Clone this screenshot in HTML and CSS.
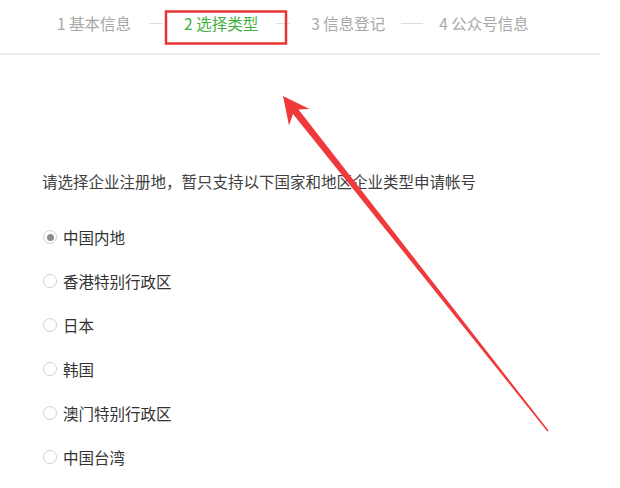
FILE: index.html
```html
<!DOCTYPE html>
<html lang="zh-CN">

<head>
    <meta charset="UTF-8">
    <meta name="viewport" content="width=device-width, initial-scale=1.0">
    <title>选择类型</title>
    <link rel="stylesheet" href="styles.css">
</head>

<body>
    <div class="page">
        <div class="steps">
            <span class="step">1 基本信息</span>
            <span class="step-line"></span>
            <span class="step active">2 选择类型</span>
            <span class="step-line"></span>
            <span class="step">3 信息登记</span>
            <span class="step-line long"></span>
            <span class="step">4 公众号信息</span>
        </div>

        <div class="content">
            <p class="intro">请选择企业注册地，暂只支持以下国家和地区企业类型申请帐号</p>
            <ul class="regions">
                <li><span class="radio checked"></span>中国内地</li>
                <li><span class="radio"></span>香港特别行政区</li>
                <li><span class="radio"></span>日本</li>
                <li><span class="radio"></span>韩国</li>
                <li><span class="radio"></span>澳门特别行政区</li>
                <li><span class="radio"></span>中国台湾</li>
            </ul>
        </div>

        <!-- annotation drawn over the screenshot -->
        <svg class="markup" width="620" height="488" viewBox="0 0 620 488">
            <rect x="166" y="11.5" width="120" height="32" fill="none" stroke="#e83430" stroke-width="2.5" />
            <polygon fill="#f0393a"
                points="283,96 289,125.5 293,114 547.4,431.4 548.6,430.6 298.5,109.6 309.5,109" />
        </svg>
    </div>
</body>

</html>
```

FILE: styles.css
```css
body {
    margin: 0;
    background: #fff;
    font-family: "Noto Sans CJK SC", "Microsoft YaHei", sans-serif;
    color: #353535;
}

.page {
    position: relative;
    width: 620px;
    height: 488px;
    overflow: hidden;
}

.steps {
    display: flex;
    align-items: center;
    width: 543px;
    height: 46px;
    padding: 0 0 7px 57px;
    border-bottom: 2px solid #eeeeee;
    font-size: 15.5px;
    color: #a8a8a8;
}

.step {
    white-space: nowrap;
    line-height: 20px;
}

.step.active {
    color: #3fb040;
}

.step-line {
    width: 14px;
    height: 1px;
    background: #dedede;
    margin: 0 21px 0 18px;
}

.step-line.long {
    width: 22px;
    margin: 0 16px;
}

.content {
    padding-left: 42px;
}

.intro {
    margin: 116px 0 0 0;
    font-size: 15.5px;
    line-height: 20px;
    color: #404040;
}

.regions {
    list-style: none;
    margin: 24px 0 0 0;
    padding: 0;
}

.regions li {
    display: flex;
    align-items: center;
    height: 44px;
    font-size: 15.5px;
    color: #333;
}

.radio {
    width: 14px;
    height: 14px;
    border: 1px solid #d0d0d0;
    border-radius: 50%;
    margin: 0 6px 0 1px;
    box-sizing: border-box;
    display: flex;
    align-items: center;
    justify-content: center;
}

.radio.checked::after {
    content: "";
    width: 7px;
    height: 7px;
    border-radius: 50%;
    background: #8c8c8c;
}

.markup {
    position: absolute;
    left: 0;
    top: 0;
    pointer-events: none;
}
```
